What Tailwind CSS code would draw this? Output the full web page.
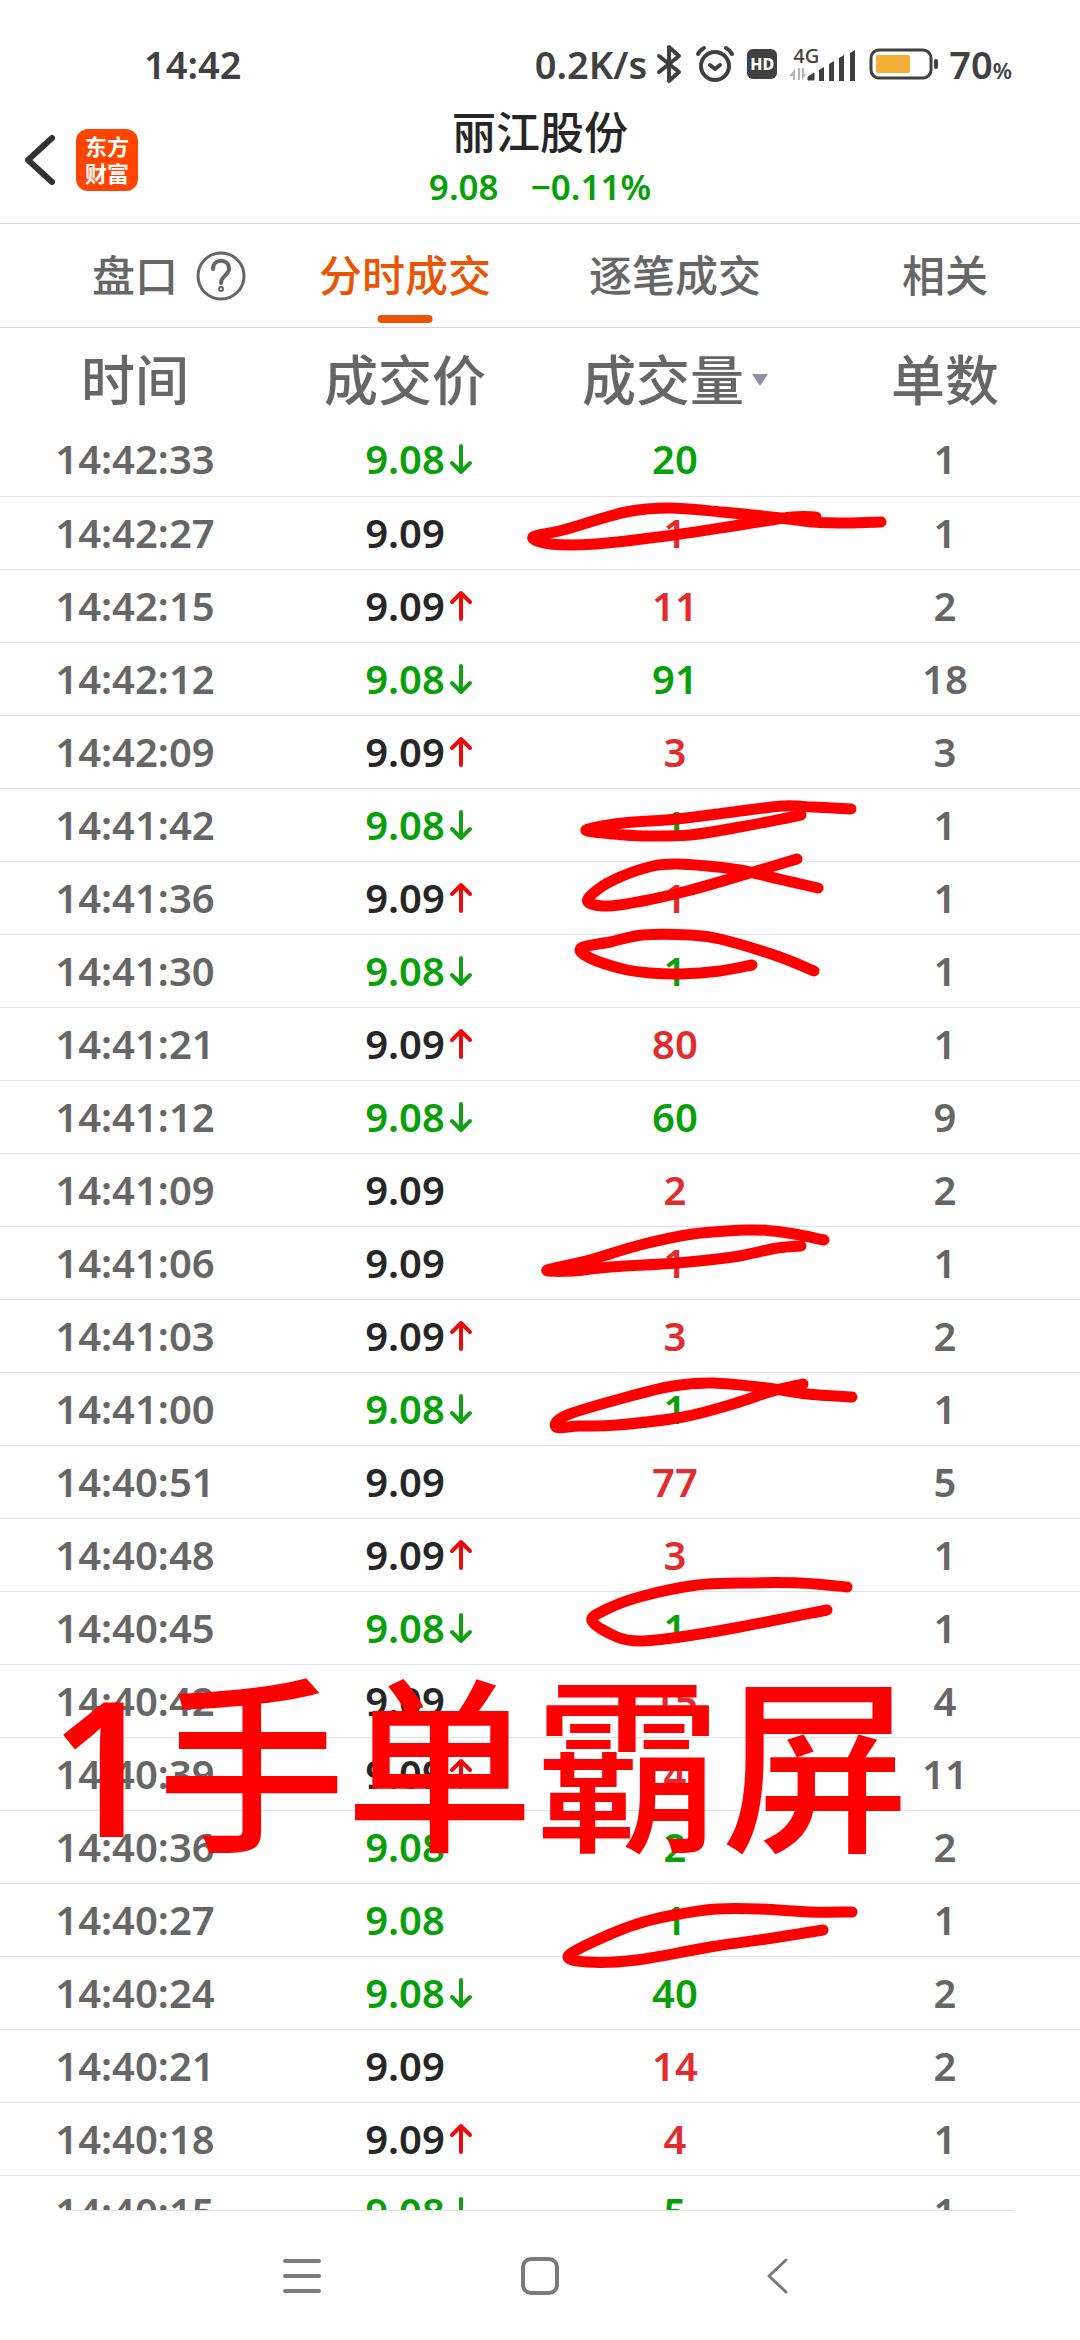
<!DOCTYPE html>
<html lang="zh-CN">

<head>
    <meta charset="UTF-8">
    <meta name="viewport" content="width=device-width, initial-scale=1.0">
    <title>丽江股份 - 分时成交</title>
    <!-- Tailwind CSS CDN -->
    <script src="https://cdn.jsdelivr.net/npm/@tailwindcss/browser@4"></script>
</head>

<body class="h-screen flex flex-col overflow-hidden bg-[#fefefe] text-[#666] font-medium font-['Noto_Sans','Noto_Sans_CJK_SC',sans-serif]">

    <!-- Status bar -->
    <div class="h-[104px] shrink-0 flex items-center justify-between pt-6 pl-36 pr-[68px] text-[#404040] text-[38px] leading-none font-semibold">
        <span>14:42</span>
        <div class="flex items-center">
            <span class="mr-2">0.2K/s</span>
            <svg class="w-7 h-10 mr-3" viewBox="0 0 28 40" fill="none" stroke="currentColor" stroke-width="4" stroke-linejoin="round" stroke-linecap="round">
                <path d="M4 12 L24 28 L14 37 V3 L24 12 L4 28" />
            </svg>
            <svg class="w-10 h-10 mr-3" viewBox="0 0 40 40" fill="none" stroke="currentColor" stroke-width="4" stroke-linecap="round">
                <circle cx="20" cy="22" r="14" />
                <path d="M15 21 L20 25 L25 21" stroke-linejoin="round" />
                <path d="M3 10 Q5 6 9 4 M37 10 Q35 6 31 4" />
            </svg>
            <span class="w-[30px] h-[30px] mr-3 rounded-md bg-[#404040] text-white text-[16px] leading-none font-extrabold flex items-center justify-center">HD</span>
            <div class="relative w-[68px] h-9 mr-3">
                <span class="absolute left-1 top-0 text-[20px] leading-none font-medium">4G</span>
                <svg class="w-full h-full" viewBox="0 0 68 36" fill="currentColor">
                    <path d="M6 34 V23 L0 30 H4 V34 Z M9 22 V34 H11 V22 Z M13 22 V34 L17 28 H15 V22 Z" fill="#b5b5b5" />
                    <path d="M19 34 V31 L25 27 V34 Z" stroke="currentColor" stroke-linejoin="round" />
                    <path d="M30 24 L35 21 V35 H30 Z M40 18 L45 15 V35 H40 Z M50 12 L55 9 V35 H50 Z M61 7 L66 4 V35 H61 Z" />
                </svg>
            </div>
            <svg class="w-[72px] h-8 mr-2" viewBox="0 0 72 32">
                <rect x="2" y="2" width="60" height="28" rx="8" fill="none" stroke="#404040" stroke-width="3" />
                <rect x="7" y="7" width="34" height="18" rx="2" fill="#f5af38" />
                <rect x="65" y="11" width="4" height="10" rx="2" fill="#404040" />
            </svg>
            <span>70<span class="text-[22px]">%</span></span>
        </div>
    </div>

    <!-- Header -->
    <header class="h-[120px] shrink-0 grid grid-cols-3 border-b border-[#d6d6d6]">
        <div class="flex items-center gap-5 pl-6 pb-2">
            <button type="button" aria-label="返回">
                <svg class="w-8 h-[52px]" viewBox="0 0 32 52" fill="none" stroke="#333" stroke-width="6" stroke-linecap="round" stroke-linejoin="round">
                    <path d="M28 4 L4 26 L28 48" />
                </svg>
            </button>
            <a href="#" class="w-[62px] h-[62px] rounded-xl bg-[#ff4400] text-white text-[22px] leading-[27px] font-bold flex flex-col items-center justify-center">
                <span>东方</span>
                <span>财富</span>
            </a>
        </div>
        <div class="flex flex-col items-center">
            <h1 class="text-[44px] leading-[56px] text-[#262626] whitespace-nowrap">丽江股份</h1>
            <p class="text-[35px] leading-[54px] font-semibold text-[#08a008] flex gap-8"><span>9.08</span><span>−0.11%</span></p>
        </div>
    </header>

    <!-- Tabs -->
    <nav class="h-[104px] shrink-0 grid grid-cols-4 border-b border-[#d6d6d6] text-[43px] leading-none">
        <button type="button" class="relative">盘口
            <svg class="absolute left-[196px] top-[27px] w-[50px] h-[50px]" viewBox="0 0 50 50" fill="none" stroke="currentColor" stroke-width="3" stroke-linecap="round">
                <circle cx="25" cy="25" r="23" />
                <path d="M17 18 C17 7 33 7 33 18 C33 24 25 25 25 32" stroke-width="4" />
                <circle cx="25" cy="38" r="1" stroke-width="4" />
            </svg>
        </button>
        <button type="button" class="relative text-[#e95504]">分时成交
            <span class="absolute left-1/2 -translate-x-1/2 bottom-1 w-[55px] h-2 rounded-full bg-[#e95504]"></span>
        </button>
        <button type="button">逐笔成交</button>
        <button type="button">相关</button>
    </nav>

    <!-- Trades -->
    <main class="relative flex-1 min-h-0 overflow-hidden">
        <table class="w-full table-fixed text-center text-[40px] leading-none">
            <thead class="text-[54px]">
                <tr class="h-[95px]">
                    <th class="font-medium p-0 pt-2">时间</th>
                    <th class="font-medium p-0 pt-2">成交价</th>
                    <th class="font-medium p-0 pt-2">
                        <span class="flex items-center justify-center gap-2">成交量
                            <svg class="w-4 h-3" viewBox="0 0 16 12" fill="#92929a"><path d="M0 0 H16 L8 12 Z" /></svg>
                        </span>
                    </th>
                    <th class="font-medium p-0 pt-2">单数</th>
                </tr>
            </thead>
            <tbody id="trades" class="font-semibold"></tbody>
        </table>

        <!-- Pen marks over the list -->
        <svg class="absolute inset-0 w-full h-full" viewBox="0 328 1080 1882">
            <g id="marks" fill="none" stroke="#ff0000" stroke-width="11" stroke-linecap="round" stroke-linejoin="round"></g>
            <text x="50" y="1837" font-size="188" font-weight="500" fill="#ff0000"><tspan font-weight="600">1</tspan>手单霸屏</text>
        </svg>
    </main>

    <!-- System navigation -->
    <footer class="h-[130px] shrink-0">
        <div class="mx-[66px] border-t border-[#e2e2e2]"></div>
        <div class="h-full flex items-center justify-center gap-[198px] text-[#7a7a7a]">
            <button type="button" aria-label="菜单">
                <svg class="w-10 h-10" viewBox="0 0 40 40" stroke="currentColor" stroke-width="4" stroke-linecap="round">
                    <path d="M3 5 H37 M3 20 H37 M3 35 H37" />
                </svg>
            </button>
            <button type="button" aria-label="主页">
                <svg class="w-10 h-10" viewBox="0 0 40 40" fill="none" stroke="currentColor" stroke-width="4">
                    <rect x="3" y="3" width="34" height="34" rx="8" />
                </svg>
            </button>
            <button type="button" aria-label="后退">
                <svg class="w-10 h-10" viewBox="0 0 40 40" fill="none" stroke="currentColor" stroke-width="3" stroke-linecap="round" stroke-linejoin="round">
                    <path d="M28 4 L11 20 L28 36" />
                </svg>
            </button>
        </div>
    </footer>

    <!-- Script -->
    <script>
        // time, price, direction, volume, side, orders
        const trades = [
            ['14:42:33', '9.08', 'down', 20, 'sell', 1],
            ['14:42:27', '9.09', '', 1, 'buy', 1],
            ['14:42:15', '9.09', 'up', 11, 'buy', 2],
            ['14:42:12', '9.08', 'down', 91, 'sell', 18],
            ['14:42:09', '9.09', 'up', 3, 'buy', 3],
            ['14:41:42', '9.08', 'down', 1, 'sell', 1],
            ['14:41:36', '9.09', 'up', 1, 'buy', 1],
            ['14:41:30', '9.08', 'down', 1, 'sell', 1],
            ['14:41:21', '9.09', 'up', 80, 'buy', 1],
            ['14:41:12', '9.08', 'down', 60, 'sell', 9],
            ['14:41:09', '9.09', '', 2, 'buy', 2],
            ['14:41:06', '9.09', '', 1, 'buy', 1],
            ['14:41:03', '9.09', 'up', 3, 'buy', 2],
            ['14:41:00', '9.08', 'down', 1, 'sell', 1],
            ['14:40:51', '9.09', '', 77, 'buy', 5],
            ['14:40:48', '9.09', 'up', 3, 'buy', 1],
            ['14:40:45', '9.08', 'down', 1, 'sell', 1],
            ['14:40:42', '9.09', '', 15, 'buy', 4],
            ['14:40:39', '9.09', 'up', 4, 'buy', 11],
            ['14:40:36', '9.08', '', 2, 'sell', 2],
            ['14:40:27', '9.08', '', 1, 'sell', 1],
            ['14:40:24', '9.08', 'down', 40, 'sell', 2],
            ['14:40:21', '9.09', '', 14, 'buy', 2],
            ['14:40:18', '9.09', 'up', 4, 'buy', 1],
            ['14:40:15', '9.08', 'down', 5, 'sell', 1]
        ];

        const arrows = {
            up: '<svg class="w-6 h-8" viewBox="0 0 24 32" fill="none" stroke="#e80c0c" stroke-width="4" stroke-linecap="round" stroke-linejoin="round"><path d="M12 29 V3 M3 12 L12 3 L21 12"/></svg>',
            down: '<svg class="w-6 h-8" viewBox="0 0 24 32" fill="none" stroke="#14a014" stroke-width="4" stroke-linecap="round" stroke-linejoin="round"><path d="M12 3 V29 M3 20 L12 29 L21 20"/></svg>',
            '': ''
        };

        document.getElementById('trades').innerHTML = trades.map(([time, price, dir, volume, side, orders]) => `
            <tr class="h-[73px] border-b border-[#e2e2e2]">
                <td class="p-0">${time}</td>
                <td class="p-0">
                    <div class="grid grid-cols-[1fr_auto_1fr] items-center gap-1">
                        <span class="col-start-2 ${price === '9.08' ? 'text-[#08a008]' : 'text-[#262626]'}">${price}</span>
                        <span>${arrows[dir]}</span>
                    </div>
                </td>
                <td class="p-0 ${side === 'buy' ? 'text-[#e02c2c]' : 'text-[#08a008]'}">${volume}</td>
                <td class="p-0">${orders}</td>
            </tr>`).join('');

        // Each mark is a list of points the pen went through
        const marks = [
            [[881, 522], [848, 523], [812, 522], [781, 518], [722, 512], [670, 508], [626, 512], [563, 530], [533, 537], [550, 544], [596, 544], [674, 535], [740, 525], [792, 517], [816, 517]],
            [[851, 809], [813, 807], [783, 806], [733, 812], [677, 819], [623, 823], [586, 830], [613, 834], [643, 836], [690, 835], [740, 827], [787, 818], [801, 815]],
            [[818, 888], [783, 880], [740, 870], [707, 866], [677, 864], [653, 866], [620, 877], [597, 890], [588, 902], [610, 906], [643, 901], [687, 891], [733, 878], [797, 859]],
            [[814, 971], [777, 956], [720, 939], [690, 935], [643, 935], [610, 942], [581, 948], [590, 958], [623, 969], [650, 973], [680, 974], [720, 971], [752, 965]],
            [[824, 1240], [800, 1235], [773, 1231], [747, 1230], [693, 1234], [640, 1245], [590, 1260], [547, 1270], [573, 1271], [610, 1267], [677, 1263], [733, 1257], [777, 1248], [801, 1246]],
            [[852, 1397], [807, 1394], [767, 1388], [713, 1383], [673, 1386], [627, 1397], [567, 1415], [556, 1427], [580, 1426], [617, 1425], [683, 1417], [733, 1404], [773, 1391], [803, 1384]],
            [[847, 1587], [800, 1583], [740, 1583], [697, 1585], [643, 1596], [607, 1609], [592, 1621], [617, 1637], [640, 1641], [680, 1637], [740, 1627], [827, 1610]],
            [[852, 1912], [810, 1912], [760, 1909], [717, 1909], [680, 1914], [647, 1921], [613, 1933], [569, 1955], [587, 1962], [637, 1960], [710, 1947], [773, 1938], [823, 1930]]
        ];

        // Smooth curve through the points
        function curve(points) {
            let d = `M${points[0]}`;
            for (let i = 0; i < points.length - 1; i++) {
                const a = points[i - 1] || points[i];
                const b = points[i];
                const c = points[i + 1];
                const e = points[i + 2] || c;
                d += ` C${b[0] + (c[0] - a[0]) / 6},${b[1] + (c[1] - a[1]) / 6} ${c[0] - (e[0] - b[0]) / 6},${c[1] - (e[1] - b[1]) / 6} ${c}`;
            }
            return d;
        }

        document.getElementById('marks').innerHTML = marks.map(points => `<path d="${curve(points)}"/>`).join('');
    </script>
</body>

</html>
